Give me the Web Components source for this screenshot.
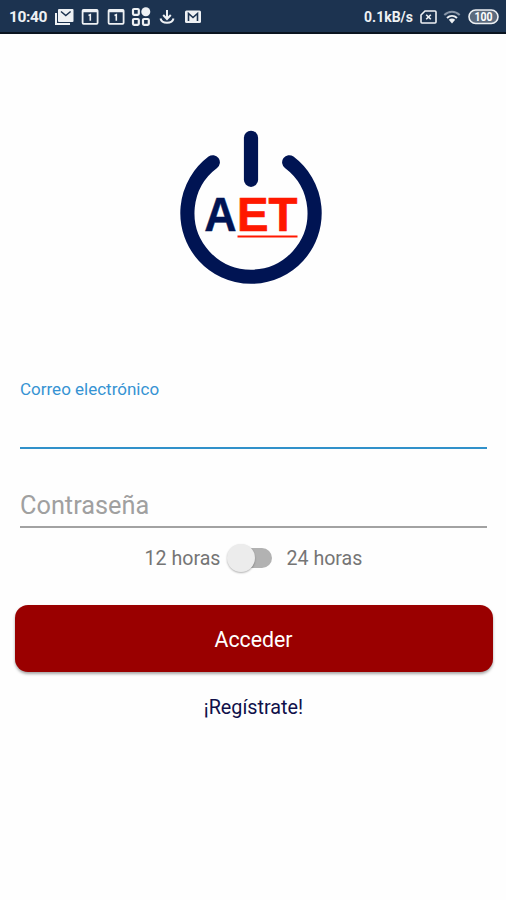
<!DOCTYPE html>
<html lang="es">
<head>
  <meta charset="UTF-8">
  <meta name="viewport" content="width=device-width, initial-scale=1.0">
  <title>AET</title>
  <style>
    body {
      margin: 0;
      background: #fefefe;
      font-family: Roboto, "Liberation Sans", sans-serif;
    }
  </style>
</head>
<body>
  <login-page></login-page>

  <script>
    class StatusBar extends HTMLElement {
      constructor() {
        super();
        this.shadowDOM = this.attachShadow({ mode: "open" });
      }

      connectedCallback() {
        this.render();
      }

      render() {
        this.shadowDOM.innerHTML = `
          <style>
            :host {
              display: flex;
              align-items: center;
              justify-content: space-between;
              box-sizing: border-box;
              height: 34px;
              padding: 2px 7px 0 9px;
              background: #1c3350;
              border-bottom: 2px solid #0a1420;
              color: #eef1f4;
              font-weight: 700;
            }

            div {
              display: flex;
              align-items: center;
            }

            .time {
              width: 45px;
              font-size: 15.5px;
              letter-spacing: -0.4px;
            }

            .left svg {
              width: 20px;
              height: 20px;
              margin-right: 5.8px;
            }

            .speed {
              font-size: 14px;
              margin-right: 7px;
            }

            .right svg {
              display: block;
            }
          </style>
          <div class="left">
            <span class="time">10:40</span>
            <svg viewBox="0 0 20 20">
              <path d="M2 6v11h14" fill="none" stroke="#eef1f4" stroke-width="2"/>
              <rect x="4" y="2" width="15.5" height="13" rx="1" fill="#eef1f4"/>
              <path d="M7 4.500l4.800 4 4.800-4" fill="none" stroke="#1c3350" stroke-width="1.500"/>
            </svg>
            <svg viewBox="0 0 20 20">
              <rect x="2.600" y="2.800" width="15" height="14" rx="1" fill="none" stroke="#eef1f4" stroke-width="1.800"/>
              <path d="M2.600 4h15" stroke="#eef1f4" stroke-width="2.500"/>
              <path d="M8.500 8.500l1.800-.8v6" fill="none" stroke="#eef1f4" stroke-width="1.600"/>
            </svg>
            <svg viewBox="0 0 20 20">
              <rect x="2.600" y="2.800" width="15" height="14" rx="1" fill="none" stroke="#eef1f4" stroke-width="1.800"/>
              <path d="M2.600 4h15" stroke="#eef1f4" stroke-width="2.500"/>
              <path d="M8.500 8.500l1.800-.8v6" fill="none" stroke="#eef1f4" stroke-width="1.600"/>
            </svg>
            <svg viewBox="0 0 20 20">
              <g fill="none" stroke="#eef1f4" stroke-width="2.200">
                <rect x="2" y="2" width="5.800" height="5.800" rx="1"/>
                <rect x="2" y="12" width="5.800" height="5.800" rx="1"/>
                <rect x="12" y="12" width="5.800" height="5.800" rx="1"/>
              </g>
              <circle cx="14.800" cy="4.800" r="4.500" fill="#eef1f4"/>
            </svg>
            <svg viewBox="0 0 20 20">
              <path d="M10 3v8.500M6.200 8l3.800 4 3.800-4M3.500 11.500c1.300 5.800 11.700 5.800 13 0" fill="none" stroke="#eef1f4" stroke-width="2"/>
            </svg>
            <svg viewBox="0 0 20 20">
              <rect x="2" y="3.500" width="16" height="12.500" rx="1.500" fill="#eef1f4"/>
              <path d="M5.500 14v-7.500l4.500 4 4.500-4v7.500" fill="none" stroke="#1c3350" stroke-width="1.600"/>
            </svg>
          </div>
          <div class="right">
            <span class="speed">0.1kB/s</span>
            <svg width="17" height="16" viewBox="0 0 17 16">
              <path d="M5 2h10q1 0 1 1v10q0 1-1 1H2q-1 0-1-1V6z" fill="none" stroke="#eef1f4" stroke-width="1.600"/>
              <path d="M6.200 5.700l4.600 4.600M10.800 5.700l-4.600 4.600" stroke="#eef1f4" stroke-width="1.600"/>
            </svg>
            <svg width="18" height="16" viewBox="0 0 18 16" style="margin: 0 7px 0 6px">
              <path d="M1.300 6c4.500-4.300 10.900-4.300 15.400 0" fill="none" stroke="#8795a7" stroke-width="2"/>
              <path d="M4 9c3-2.800 7-2.800 10 0" fill="none" stroke="#eef1f4" stroke-width="2"/>
              <path d="M5.800 10.800q3.200-2.600 6.400 0L9 14.500z" fill="#eef1f4"/>
            </svg>
            <svg width="31" height="16" viewBox="0 0 31 16">
              <rect x="1" y="1" width="29" height="13.500" rx="6.700" fill="#5c6b7e" stroke="#eef1f4" stroke-width="1.600"/>
              <text x="15.500" y="12.200" text-anchor="middle" font-size="12" textLength="18" lengthAdjust="spacingAndGlyphs" fill="#fff">100</text>
            </svg>
          </div>
        `;
      }
    }

    class AppLogo extends HTMLElement {
      constructor() {
        super();
        this.shadowDOM = this.attachShadow({ mode: "open" });
      }

      connectedCallback() {
        this.render();
      }

      render() {
        this.shadowDOM.innerHTML = `
          <style>
            :host {
              display: block;
              width: 144px;
              height: 156px;
            }

            svg {
              display: block;
            }

            text {
              font: 700 48.5px "Liberation Sans", Arial, sans-serif;
            }
          </style>
          <svg width="144" height="156" viewBox="0 0 144 156">
            <g fill="none" stroke="#001453" stroke-width="14.200" stroke-linecap="round">
              <path d="M33.800 33.300a63.600 63.600 0 1 0 76.400 0"/>
              <path d="M72 8.800v42"/>
            </g>
            <text x="25.200" y="102" fill="#001453" stroke="#001453" stroke-width="0.500" textLength="32.300" lengthAdjust="spacingAndGlyphs">A</text>
            <text x="58" y="102" fill="#ff1800" stroke="#ff1800" stroke-width="0.700" textLength="60.500" lengthAdjust="spacingAndGlyphs">ET</text>
            <path d="M58.500 107.500h60" stroke="#ff1800" stroke-width="2.200"/>
          </svg>
        `;
      }
    }

    class TextField extends HTMLElement {
      constructor() {
        super();
        this.shadowDOM = this.attachShadow({ mode: "open" });
      }

      connectedCallback() {
        this.render();
      }

      render() {
        this.shadowDOM.innerHTML = `
          <style>
            :host {
              display: flex;
              flex-direction: column;
              justify-content: flex-end;
              box-sizing: border-box;
              height: 46px;
              border-bottom: 2px solid #a2a2a2;
              color: #a0a0a0;
              font-size: 25.3px;
              line-height: 30px;
              padding-bottom: 5px;
            }

            :host([focused]) {
              justify-content: flex-start;
              height: 70px;
              border-color: #3191ca;
              color: #3693d3;
              font-size: 17px;
              line-height: 21px;
              padding-bottom: 0;
            }
          </style>
          <label><slot></slot></label>
        `;
      }
    }

    class HourSwitch extends HTMLElement {
      constructor() {
        super();
        this.shadowDOM = this.attachShadow({ mode: "open" });
      }

      connectedCallback() {
        this.render();
      }

      render() {
        this.shadowDOM.innerHTML = `
          <style>
            :host {
              display: flex;
              align-items: center;
              height: 32px;
              color: #757575;
              font-size: 19.6px;
            }

            .track {
              display: flex;
              align-items: center;
              width: 40px;
              height: 20px;
              margin: 0 15px 0 11px;
              border-radius: 10px;
              background: #b2b2b2;
            }

            .thumb {
              flex: none;
              width: 28px;
              height: 28px;
              margin-left: -5px;
              border-radius: 50%;
              background: #ececec;
              box-shadow: 0 1px 2px rgba(0, 0, 0, 0.3);
            }
          </style>
          <slot name="off"></slot>
          <div class="track"><div class="thumb"></div></div>
          <slot name="on"></slot>
        `;
      }
    }

    class AccessButton extends HTMLElement {
      constructor() {
        super();
        this.shadowDOM = this.attachShadow({ mode: "open" });
      }

      connectedCallback() {
        this.render();
      }

      render() {
        this.shadowDOM.innerHTML = `
          <style>
            :host {
              display: block;
            }

            button {
              display: block;
              width: 100%;
              height: 67px;
              padding: 2px 0 0;
              border: none;
              border-radius: 13px;
              background: #9a0000;
              box-shadow: 0 2px 3px rgba(0, 0, 0, 0.35);
              color: #fff;
              font-family: inherit;
              font-size: 21.3px;
              cursor: pointer;
            }
          </style>
          <button><slot></slot></button>
        `;
      }
    }

    class LoginPage extends HTMLElement {
      constructor() {
        super();
        this.shadowDOM = this.attachShadow({ mode: "open" });
      }

      connectedCallback() {
        this.render();
      }

      render() {
        this.shadowDOM.innerHTML = `
          <style>
            :host {
              display: block;
              height: 900px;
              overflow: hidden;
            }

            main {
              display: flex;
              flex-direction: column;
              align-items: center;
              padding: 95px 13.5px 0 14.5px;
            }

            app-logo {
              margin: 0 5px 94px 0;
            }

            form {
              display: flex;
              flex-direction: column;
              gap: 33px;
              width: 467px;
            }

            hour-switch {
              margin-top: 14px;
            }

            access-button {
              align-self: stretch;
              margin: 31px 0 24px;
            }

            a {
              color: #10104a;
              font-size: 19.8px;
              line-height: 24px;
              text-decoration: none;
            }
          </style>
          <status-bar></status-bar>
          <main>
            <app-logo></app-logo>
            <form>
              <text-field focused>Correo electrónico</text-field>
              <text-field>Contraseña</text-field>
            </form>
            <hour-switch>
              <span slot="off">12 horas</span>
              <span slot="on">24 horas</span>
            </hour-switch>
            <access-button>Acceder</access-button>
            <a href="#">¡Regístrate!</a>
          </main>
        `;
      }
    }

    customElements.define("status-bar", StatusBar);
    customElements.define("app-logo", AppLogo);
    customElements.define("text-field", TextField);
    customElements.define("hour-switch", HourSwitch);
    customElements.define("access-button", AccessButton);
    customElements.define("login-page", LoginPage);
  </script>
</body>
</html>
